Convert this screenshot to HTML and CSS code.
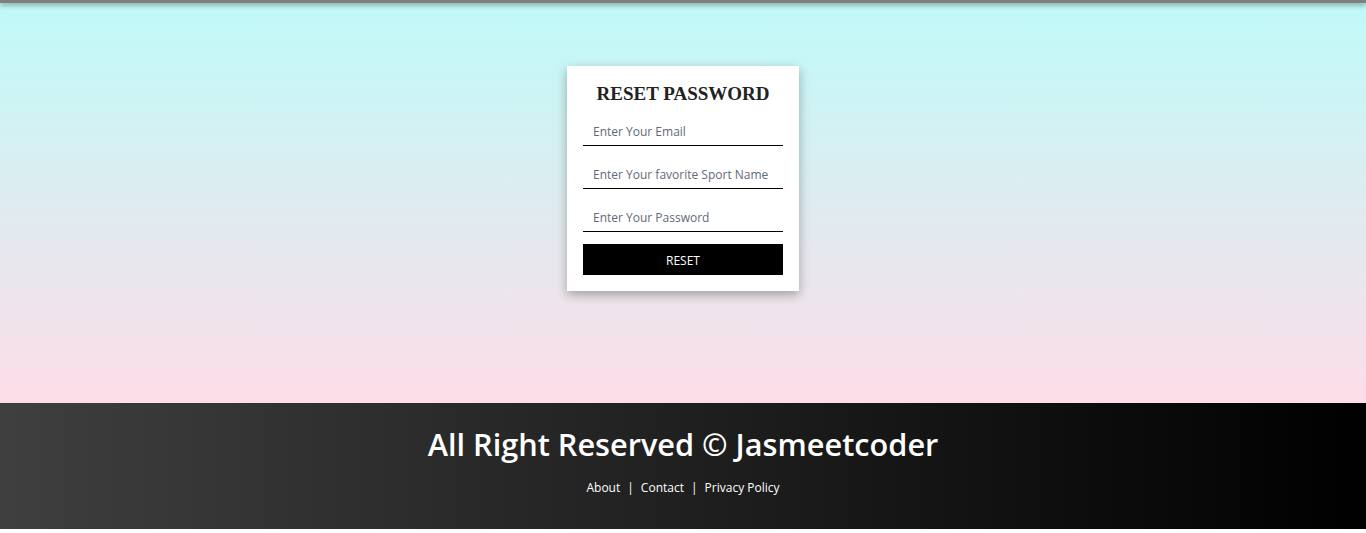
FILE: index.html
```html
<!DOCTYPE html>
<html lang="en">
<head>
<meta charset="utf-8">
<title>Reset Password</title>
<link rel="stylesheet" href="styles.css">
</head>
<body>
<div class="topbar"></div>
<main class="main">
  <form class="card">
    <h2 class="card-title">RESET PASSWORD</h2>
    <input class="field" type="email" placeholder="Enter Your Email">
    <input class="field" type="text" placeholder="Enter Your favorite Sport Name">
    <input class="field" type="password" placeholder="Enter Your Password">
    <button class="btn" type="button">RESET</button>
  </form>
</main>
<footer class="footer">
  <h1 class="footer-title">All Right Reserved © Jasmeetcoder</h1>
  <nav class="footer-links">
    <a href="#">About</a><span class="sep">|</span><a href="#">Contact</a><span class="sep">|</span><a href="#">Privacy Policy</a>
  </nav>
</footer>
</body>
</html>
```
FILE: styles.css
```css
* { box-sizing: border-box; }
html, body { margin: 0; padding: 0; background: #fff; }
body { font-family: "Open Sans", "Noto Sans", sans-serif; }

.topbar {
  height: 3px;
  background: #808080;
  box-shadow: 0 2px 5px rgba(0,0,0,0.45);
  position: relative;
  z-index: 2;
}

.main {
  height: 400px;
  padding-top: 63px;
  background: linear-gradient(to bottom, #bffaf8 0%, #fddde8 100%);
  display: flex;
  justify-content: center;
  align-items: flex-start;
}

.card {
  width: 232px;
  background: #fff;
  padding: 16px;
  box-shadow: 0 4px 10px rgba(0,0,0,0.3);
  display: flex;
  flex-direction: column;
}

.card-title {
  margin: 0 0 9px;
  font-family: "Liberation Serif", "DejaVu Serif", serif;
  font-weight: bold;
  font-size: 19px;
  line-height: 24px;
  text-align: center;
  color: #222;
}

.field {
  display: block;
  width: 100%;
  height: 31px;
  margin: 0 0 12px;
  padding: 2px 10px 0;
  border: none;
  border-bottom: 1px solid #000;
  outline: none;
  font-family: "Open Sans", sans-serif;
  font-size: 12px;
  color: #333;
  background: transparent;
}
.field::placeholder { color: #5f6a78; }

.btn {
  height: 31px;
  width: 100%;
  border: none;
  background: #000;
  color: #fff;
  font-family: "Open Sans", sans-serif;
  font-size: 12px;
  padding-top: 2px;
  cursor: pointer;
}

.footer {
  height: 126px;
  background: linear-gradient(to right, #3f3f3f, #000);
  color: #fff;
  text-align: center;
  padding-top: 20px;
}

.footer-title {
  margin: 0;
  font-family: "Open Sans", sans-serif;
  font-weight: 600;
  font-size: 30.7px;
  line-height: 42px;
}

.footer-links {
  margin-top: 14px;
  font-size: 12px;
  line-height: 18px;
}
.footer-links a { color: #fff; text-decoration: none; }
.footer-links .sep { margin: 0 7px; }
```
